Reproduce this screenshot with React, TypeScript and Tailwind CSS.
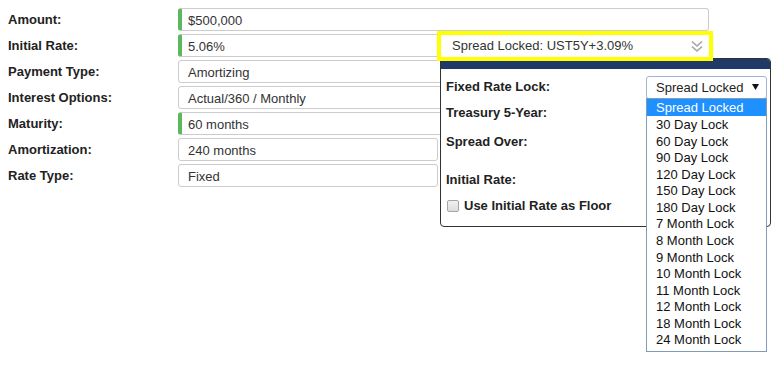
import React from "react";

type Row = { label: string; value: string; green: boolean; wide: boolean };

const rows: Row[] = [
  { label: "Amount:", value: "$500,000", green: true, wide: true },
  { label: "Initial Rate:", value: "5.06%", green: true, wide: true },
  { label: "Payment Type:", value: "Amortizing", green: false, wide: true },
  { label: "Interest Options:", value: "Actual/360 / Monthly", green: false, wide: true },
  { label: "Maturity:", value: "60 months", green: true, wide: true },
  { label: "Amortization:", value: "240 months", green: false, wide: false },
  { label: "Rate Type:", value: "Fixed", green: false, wide: false },
];

const options = [
  "Spread Locked",
  "30 Day Lock",
  "60 Day Lock",
  "90 Day Lock",
  "120 Day Lock",
  "150 Day Lock",
  "180 Day Lock",
  "7 Month Lock",
  "8 Month Lock",
  "9 Month Lock",
  "10 Month Lock",
  "11 Month Lock",
  "12 Month Lock",
  "18 Month Lock",
  "24 Month Lock",
];

function InputBox({ row }: { row: Row }) {
  const width = row.wide ? "w-[531px]" : "w-[260px]";
  const green = row.green
    ? "border-l-[4px] border-l-[#5cb85c] pl-[6px]"
    : "pl-[9px]";
  return (
    <div
      className={`${width} ${green} h-[23px] pt-[2px] border border-[#cccccc] rounded-[3px] bg-white flex items-center text-[13px] text-[#333]`}
    >
      {row.value}
    </div>
  );
}

export default function App() {
  return (
    <div className="relative w-[781px] h-[372px] bg-white font-['Liberation_Sans',Arial,sans-serif] text-[#222] overflow-hidden">
      {/* Form */}
      <div className="pt-[8px] pl-[8px] flex flex-col gap-[3px]">
        {rows.map((r) => (
          <div key={r.label} className="flex items-center h-[23px]">
            <div className="w-[170px] pt-[1px] text-[13px] font-bold text-[#222]">{r.label}</div>
            <InputBox row={r} />
          </div>
        ))}
      </div>

      {/* Popover panel */}
      <div className="absolute left-[440px] top-[58px] w-[331px] h-[169px] z-10 bg-white border border-[#333] rounded-b-[4px] rounded-tr-[4px] overflow-hidden">
        <div className="h-[10px] bg-[#1f3a68]" />
        <div className="pl-[5px] pr-[3px]">
          <div className="flex items-center h-[24px] mt-[6px]">
            <div className="w-[200px] text-[13px] font-bold text-[#222]">Fixed Rate Lock:</div>
            <div className="w-[121px] h-[23px] border border-[#9fb4d8] rounded-[3px] bg-white flex items-center justify-between pl-[9px] pr-[7px] text-[13px] text-[#222]">
              <span className="pt-[1px]">Spread Locked</span>
              <svg width="7" height="6" viewBox="0 0 7 6">
                <polygon points="0,0 7,0 3.5,6" fill="#111" />
              </svg>
            </div>
          </div>
          <div className="flex items-center h-[24px] mt-[2px] text-[13px] font-bold text-[#222]">Treasury 5-Year:</div>
          <div className="flex items-center h-[24px] mt-[5px] text-[13px] font-bold text-[#222]">Spread Over:</div>
          <div className="flex items-center h-[24px] mt-[14px] text-[13px] font-bold text-[#222]">Initial Rate:</div>
          <div className="flex items-center h-[24px] mt-[2px] gap-[5px] text-[13px] font-bold text-[#222]">
            <div className="ml-[1px] w-[12px] h-[12px] border border-[#a6a6a6] rounded-[2px] bg-gradient-to-b from-[#f2f2f2] to-[#dcdcdc]" />
            <span>Use Initial Rate as Floor</span>
          </div>
        </div>
      </div>

      {/* Yellow highlighted summary */}
      <div className="absolute left-[437px] top-[31px] w-[276px] h-[30px] z-20 border-[4px] border-[#ffff00] bg-white flex items-center justify-between pl-[11px] pr-[6px] text-[13px] text-[#333]">
        <span>Spread Locked: UST5Y+3.09%</span>
        <svg width="12" height="13" viewBox="0 0 12 13" fill="none" stroke="#a3a3a3" strokeWidth="1.6">
          <path d="M1 1.5 L6 6 L11 1.5" />
          <path d="M1 6.5 L6 11 L11 6.5" />
        </svg>
      </div>

      {/* Open dropdown list */}
      <div className="absolute left-[646px] top-[98px] w-[121px] h-[254px] z-30 bg-white border border-[#7f9db9]">
        {options.map((o, i) => (
          <div
            key={o}
            className={
              i === 0
                ? "h-[16.57px] flex items-center pl-[9px] pt-[1px] text-[13px] bg-[#1e90ff] text-white"
                : "h-[16.57px] flex items-center pl-[9px] pt-[2px] text-[13px] text-[#111]"
            }
          >
            {o}
          </div>
        ))}
      </div>
    </div>
  );
}
